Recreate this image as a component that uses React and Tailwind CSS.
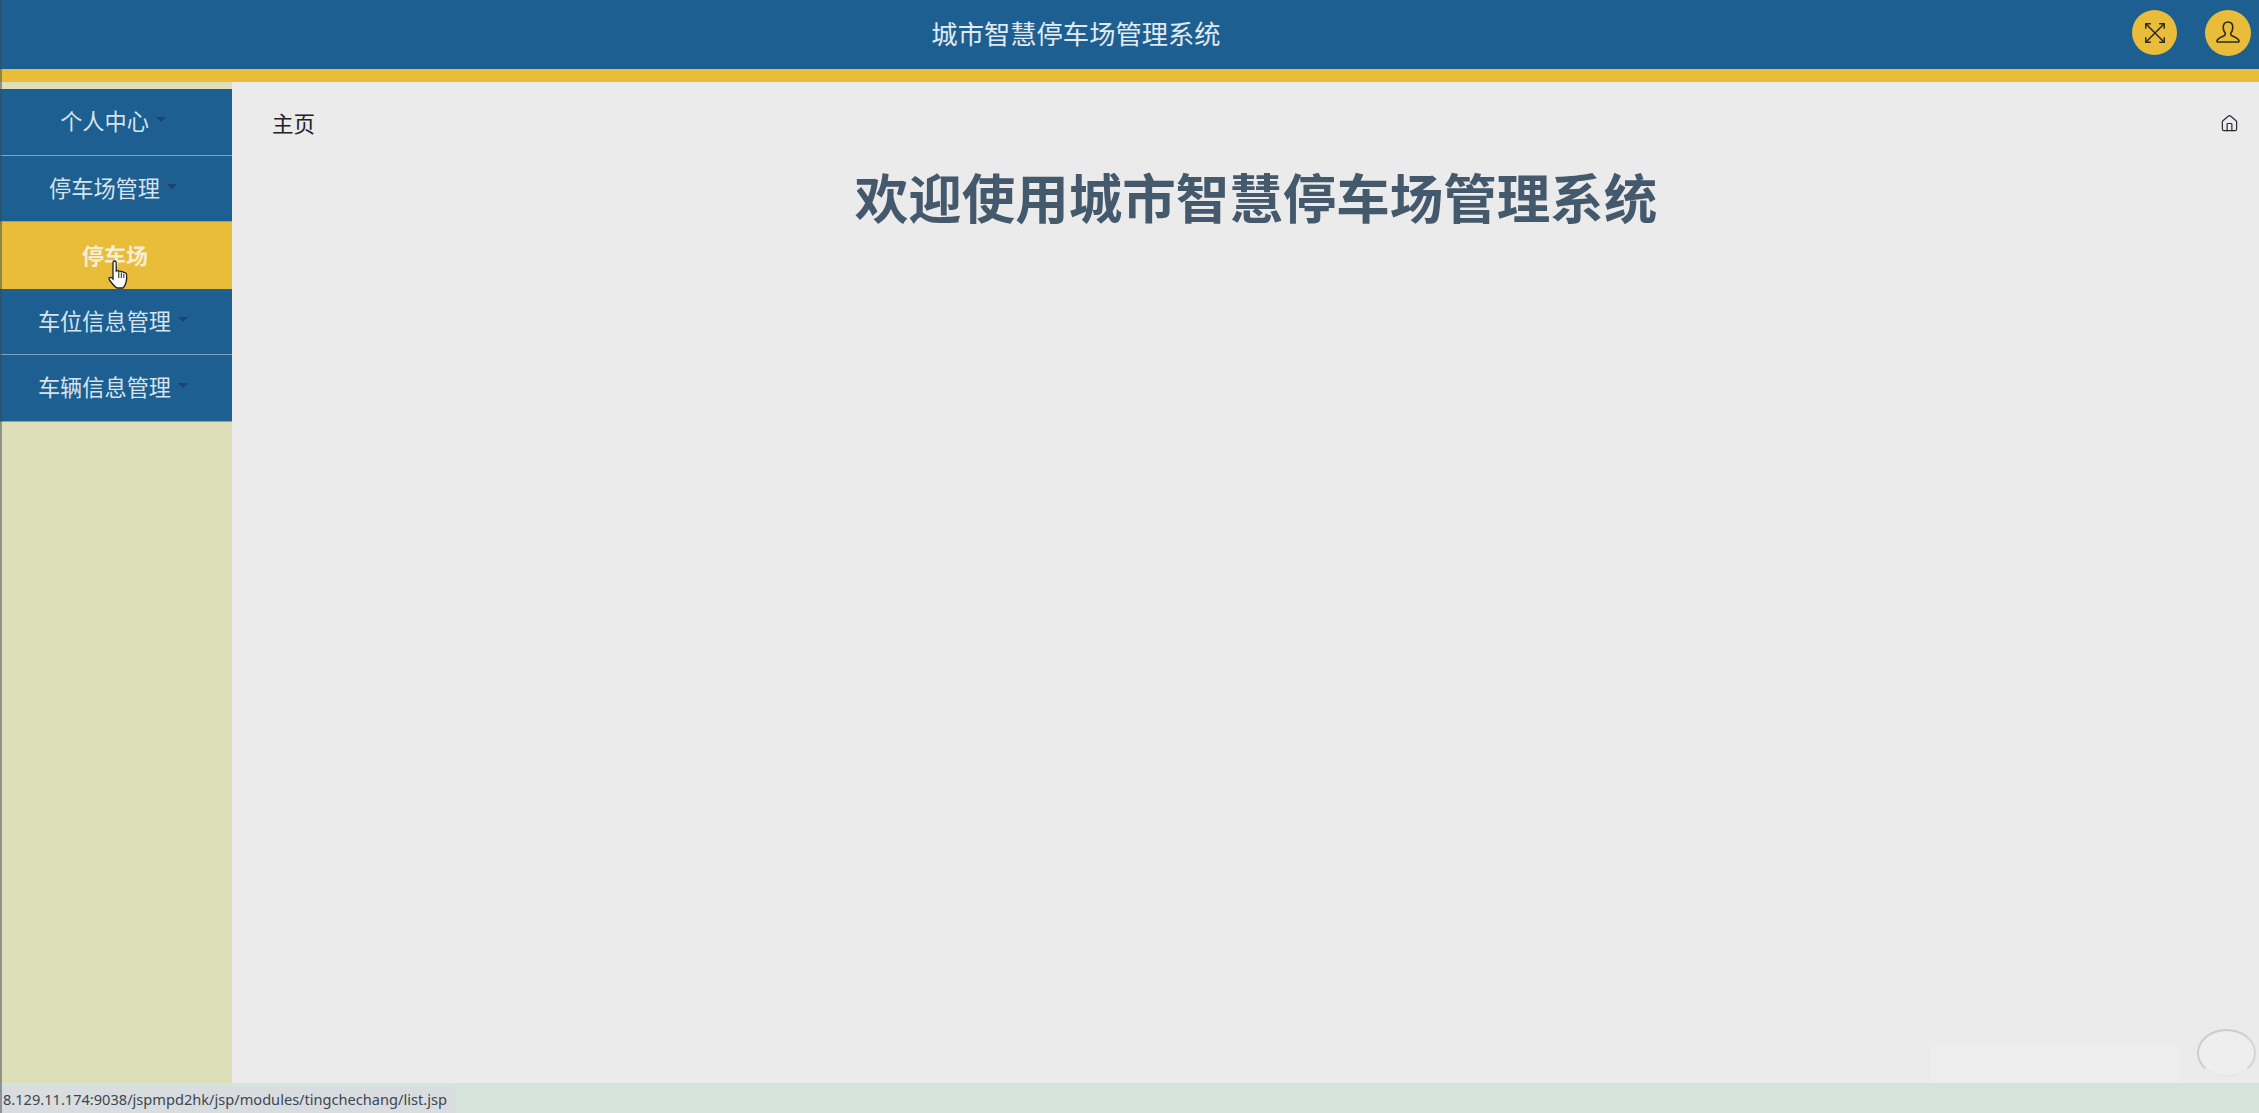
import React from 'react';
import { House } from 'lucide-react';

const font = '[font-family:"Noto_Sans_CJK_SC","Liberation_Sans",sans-serif]';

const menu = [
  { label: '个人中心' },
  { label: '停车场管理' },
  { label: '停车场', active: true },
  { label: '车位信息管理' },
  { label: '车辆信息管理' },
];

const ExpandIcon = () => (
  <svg width="24" height="24" viewBox="0 0 26 26" fill="none" stroke="#2b2a1c" strokeWidth="1.6">
    <path d="M3 3l20 20M23 3L3 23" />
    <path d="M3 8.500V3h5.500M17.500 3H23v5.500M23 17.500V23h-5.500M8.500 23H3v-5.500" />
  </svg>
);

const UserIcon = () => (
  <svg width="26" height="26" viewBox="0 0 26 26" fill="none" stroke="#2b2a1c" strokeWidth="1.6" strokeLinejoin="round">
    <path d="M13 2c3.2 0 4.8 2.4 4.8 5.4 0 2.6-1 4.6-2.2 6 0 1.4.6 2 2.400 2.800 3 1.200 5.400 2.200 6 4.600.2.800-.2 1.200-1 1.200H3c-.8 0-1.200-.4-1-1.200.6-2.400 3-3.400 6-4.600 1.800-.8 2.400-1.400 2.400-2.800-1.200-1.400-2.200-3.400-2.200-6C8.200 4.400 9.800 2 13 2z" />
  </svg>
);

const HandCursor = () => (
  <svg className="absolute left-[108px] top-[259px]" width="22" height="30" viewBox="0 0 22 30">
    <path
      d="M6.500 2c1 0 1.700.8 1.700 1.800V12c.6-.5 2-.5 2.600.3.700-.4 2-.3 2.500.6.800-.3 2-.1 2.500.8.400-.1 2.200-.1 2.700 1.300.4 3 .2 6-.5 8.500-.6 2.400-1.800 4.500-3 5.500H9c-2.500-1.500-5-4.500-7.500-8-.7-1-.6-2 .2-2.400.8-.5 2 0 3.300 1.500V3.800C5 2.800 5.600 2 6.500 2z"
      fill="#fff"
      stroke="#222"
      strokeWidth="1.300"
    />
    <path d="M10.800 13v6M13.300 14v5M15.800 15v4" stroke="#222" strokeWidth="1" />
  </svg>
);

const App = () => {
  return (
    <div className={`relative flex h-[1113px] w-[2259px] flex-col overflow-hidden bg-[#ebebeb] ${font}`}>
      <header className="flex h-[69px] shrink-0 items-center bg-[#1c5f90]">
        <div className="flex-1 pb-[3px] pl-[20px] text-center text-[26.300px] text-[#e0eaf1]">城市智慧停车场管理系统</div>
        <div className="flex items-center gap-[28px] pb-[4px] pr-[8px]">
          <button className="flex h-[45px] w-[45px] items-center justify-center rounded-full bg-[#e9bc3a]">
            <ExpandIcon />
          </button>
          <button className="flex h-[46px] w-[46px] items-center justify-center rounded-full bg-[#e9bc3a]">
            <UserIcon />
          </button>
        </div>
      </header>
      <div className="h-[13px] shrink-0 bg-[#e9bc3a]" />

      <div className="flex min-h-0 flex-1">
        <aside className="w-[232px] shrink-0 bg-[#dcdfb8] pt-[7px]">
          {menu.map((item) =>
            item.active ? (
              <div
                key={item.label}
                className="flex h-[66.500px] items-center justify-center bg-[#e9bc3a] pr-[2px] pb-[2px] text-[22px] font-bold text-[#f6eed2]"
              >
                {item.label}
              </div>
            ) : (
              <div
                key={item.label}
                className="flex h-[66.500px] items-center justify-center border-b border-[#7fa3bd] bg-[#1c5f90] pr-[6px] pb-[2px] text-[22.200px] text-[#d8e4ed]"
              >
                <span>{item.label}</span>
                <span className="mb-[2px] ml-[7px] h-0 w-0 border-x-[5px] border-t-[5px] border-x-transparent border-t-[#1a4468]" />
              </div>
            )
          )}
        </aside>

        <main className="min-w-0 flex-1">
          <div className="flex items-center justify-between pl-[40px] pr-[20px] pt-[25px]">
            <span className="text-[21.500px] leading-[32px] text-[#222222]">主页</span>
            <House size={19} strokeWidth={1.500} color="#252a33" />
          </div>
          <h1 className="mt-[22px] pl-[21px] text-center text-[53.500px] leading-[70px] font-bold text-[#44596c]">
            欢迎使用城市智慧停车场管理系统
          </h1>
        </main>
      </div>

      <footer className="flex h-[30px] shrink-0 items-end bg-[#d6e2dc]">
        <div className="flex h-[26px] w-[456px] items-center rounded-tr-[4px] bg-[#d9dde0] pl-[3px] text-[14.600px] text-[#3c4650] [font-family:'Noto_Sans','Liberation_Sans',sans-serif]">
          8.129.11.174:9038/jspmpd2hk/jsp/modules/tingchechang/list.jsp
        </div>
      </footer>

      <div className="absolute inset-y-0 left-0 w-[2px] bg-[#3a4a50]/50" />
      <HandCursor />
      <div className="absolute left-[1930px] top-[1046px] h-[37px] w-[250px] bg-[#ededed]" />
      <div className="absolute left-[2197px] top-[1029px] h-[48px] w-[59px] rounded-[50%] border-2 border-[#cdcdcd] border-b-[#e8e8e8] border-r-[#d4d4d4] bg-[#eeeeee]" />
    </div>
  );
};

export default App;
